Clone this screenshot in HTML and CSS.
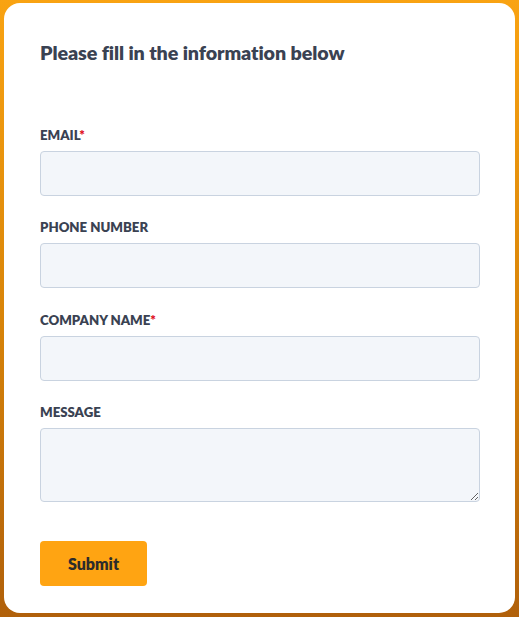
FILE: index.html
```html
<!DOCTYPE html>
<html lang="en">
<head>
  <meta charset="UTF-8" />
  <meta name="viewport" content="width=device-width, initial-scale=1.0" />
  <title>Contact Form</title>
  <link rel="stylesheet" href="styles.css">
</head>
<body>
  <div class="card">
    <h2>Please fill in the information below</h2>
    <form class="info-form">
      <div class="field">
        <label for="email">EMAIL<span class="req">*</span></label>
        <input type="email" id="email" />
      </div>
      <div class="field">
        <label for="phone">PHONE NUMBER</label>
        <input type="text" id="phone" />
      </div>
      <div class="field">
        <label for="company">COMPANY NAME<span class="req">*</span></label>
        <input type="text" id="company" />
      </div>
      <div class="field">
        <label for="message">MESSAGE</label>
        <textarea id="message"></textarea>
      </div>
      <button type="submit">Submit</button>
    </form>
  </div>
</body>
</html>
```

FILE: styles.css
```css
html {
  height: 100%;
}
body {
  font-family: Lato, "Open Sans", Arial, sans-serif;
  margin: 0;
  padding: 3px 4px 4px;
  min-height: 100%;
  box-sizing: border-box;
  background: linear-gradient(to bottom, #f9a312 0%, #d98509 50%, #b0600a 100%);
}
.card {
  background: white;
  border-radius: 16px;
  padding: 38px 35px 27px 36px;
  min-height: 610px;
  box-sizing: border-box;
}
h2 {
  color: #3a4252;
  font-size: 19.7px;
  line-height: 24px;
  margin: 0 0 61px;
  font-weight: 800;
  letter-spacing: -0.1px;
}
.field {
  margin-bottom: 22.33px;
}
label {
  display: block;
  color: #3a4252;
  font-size: 13.2px;
  font-weight: 800;
  line-height: 18px;
  margin-bottom: 7px;
}
.req {
  color: #e0101e;
}
input, textarea {
  display: block;
  width: 100%;
  box-sizing: border-box;
  height: 45px;
  background: #f3f6fa;
  border: 1px solid #c9d3e0;
  border-radius: 4px;
  font-family: inherit;
  font-size: 14px;
  padding: 8px 10px;
}
textarea {
  height: 74px;
}
button {
  margin-top: 17px;
  width: 107px;
  height: 45px;
  background: #ffa412;
  color: #2c2c2c;
  border: none;
  border-radius: 4px;
  font-family: inherit;
  font-size: 16px;
  font-weight: 800;
  cursor: pointer;
}
```
